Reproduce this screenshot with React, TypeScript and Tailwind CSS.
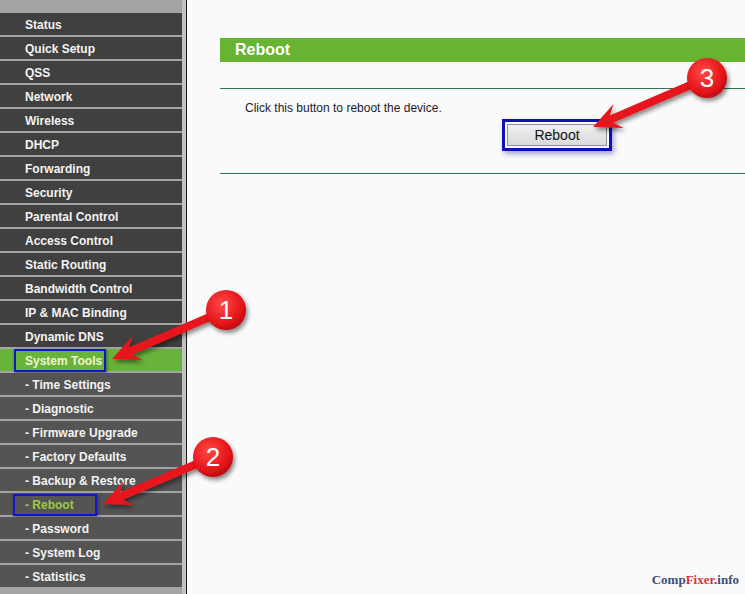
import React from "react";

type MenuItem = { label: string; sub?: boolean; active?: boolean; current?: boolean };

const menu: MenuItem[] = [
  { label: "Status" },
  { label: "Quick Setup" },
  { label: "QSS" },
  { label: "Network" },
  { label: "Wireless" },
  { label: "DHCP" },
  { label: "Forwarding" },
  { label: "Security" },
  { label: "Parental Control" },
  { label: "Access Control" },
  { label: "Static Routing" },
  { label: "Bandwidth Control" },
  { label: "IP & MAC Binding" },
  { label: "Dynamic DNS" },
  { label: "System Tools", active: true },
  { label: "- Time Settings", sub: true },
  { label: "- Diagnostic", sub: true },
  { label: "- Firmware Upgrade", sub: true },
  { label: "- Factory Defaults", sub: true },
  { label: "- Backup & Restore", sub: true },
  { label: "- Reboot", sub: true, current: true },
  { label: "- Password", sub: true },
  { label: "- System Log", sub: true },
  { label: "- Statistics", sub: true },
];

function arrowPoints(sx: number, sy: number, tx: number, ty: number) {
  const dx = tx - sx;
  const dy = ty - sy;
  const len = Math.hypot(dx, dy);
  const ux = dx / len;
  const uy = dy / len;
  const nx = -uy;
  const ny = ux;
  const w = 4;
  const L = 28;
  const H = 13;
  const notch = 20;
  const bx = tx - ux * notch;
  const by = ty - uy * notch;
  const hx = tx - ux * L;
  const hy = ty - uy * L;
  const pts = [
    [sx + nx * w, sy + ny * w],
    [bx + nx * w, by + ny * w],
    [hx + nx * H, hy + ny * H],
    [tx, ty],
    [hx - nx * H, hy - ny * H],
    [bx - nx * w, by - ny * w],
    [sx - nx * w, sy - ny * w],
  ];
  return pts.map((p) => p.map((v) => v.toFixed(1)).join(",")).join(" ");
}

const callouts = [
  { n: "1", cx: 226, cy: 310, tx: 112, ty: 359 },
  { n: "2", cx: 213, cy: 457, tx: 103, ty: 504 },
  { n: "3", cx: 707, cy: 78, tx: 593, ty: 127 },
];

function Annotations() {
  return (
    <svg className="absolute inset-0 pointer-events-none" width="745" height="594" viewBox="0 0 745 594">
      <defs>
        <filter id="shadow" x="-30%" y="-30%" width="160%" height="160%">
          <feDropShadow dx="2" dy="3" stdDeviation="2" floodColor="#000" floodOpacity="0.45" />
        </filter>
        <radialGradient id="ball" cx="40%" cy="35%" r="70%">
          <stop offset="0%" stopColor="#ff4b44" />
          <stop offset="70%" stopColor="#e5141a" />
          <stop offset="100%" stopColor="#b80c10" />
        </radialGradient>
      </defs>
      {callouts.map((c) => (
        <g key={c.n}>
          <polygon points={arrowPoints(c.cx, c.cy, c.tx, c.ty)} fill="#e6151b" filter="url(#shadow)" />
          <circle cx={c.cx} cy={c.cy} r="20" fill="url(#ball)" filter="url(#shadow)" />
          <text
            x={c.cx}
            y={c.cy + 9}
            textAnchor="middle"
            fill="#ffffff"
            fontSize="26"
            fontFamily="'Liberation Sans', Arial, sans-serif"
          >
            {c.n}
          </text>
        </g>
      ))}
    </svg>
  );
}

export default function App() {
  return (
    <div className="relative w-[745px] h-[594px] overflow-hidden bg-[#fafafa] font-['Liberation_Sans',Arial,sans-serif]">
      <div className="flex h-full">
        {/* Sidebar menu */}
        <div className="flex h-full">
          <div className="w-[182px] h-full bg-[#a4a4a4] pt-[13px] flex flex-col gap-[2px]">
            {menu.map((item) => {
              const bg = item.active ? "bg-[#68b43a]" : item.sub ? "bg-[#545454]" : "bg-[#404040]";
              const color = item.active ? "text-[#f2f3d2]" : item.current ? "text-[#9ccc3c]" : "text-[#f3f3f3]";
              return (
                <div
                  key={item.label}
                  className={`relative h-[22px] shrink-0 flex items-center pt-[1px] pl-[25px] text-[12px] font-bold ${bg} ${color}`}
                >
                  {item.label}
                  {item.active && (
                    <div className="absolute left-[14px] top-0 w-[92px] h-[23px] border-[2px] border-[#1414c8] shadow-[1px_1px_3px_rgba(0,0,80,0.5)]" />
                  )}
                  {item.current && (
                    <div className="absolute left-[13px] top-[1px] w-[84px] h-[22px] border-[2px] border-[#1414c8] shadow-[1px_1px_3px_rgba(0,0,80,0.5)]" />
                  )}
                </div>
              );
            })}
          </div>
          <div className="w-[4px] h-full bg-[#c2c2c2]" />
          <div className="w-[1px] h-full bg-[#1a1a1a]" />
        </div>

        {/* Content */}
        <div className="flex-1 pl-[33px] pt-[38px]">
          <div className="h-[24px] bg-[#67b332] flex items-center pl-[15px] text-[16px] font-bold text-white">
            Reboot
          </div>
          <div className="mt-[26px] h-[1px] bg-[#2f7650]" />
          <p className="mt-[12px] pl-[25px] text-[12px] leading-[14px] text-[#1c1a2a]">
            Click this button to reboot the device.
          </p>
          <div className="mt-[4px] pl-[282px] flex">
            <div className="flex border-[3px] border-[#1010b8] p-[2px] shadow-[2px_3px_5px_rgba(80,80,180,0.5)]">
              <button className="w-[100px] h-[22px] border border-[#8f8f8f] bg-gradient-to-b from-[#f0f0f0] to-[#dadada] text-[14px] leading-[20px] text-[#111]">
                Reboot
              </button>
            </div>
          </div>
          <div className="mt-[22px] h-[1px] bg-[#2f7650]" />
        </div>
      </div>

      <Annotations />

      <div className="absolute right-[6px] bottom-[5px] text-[13px] font-bold font-['Liberation_Serif',serif] text-[#3e4d78]">
        Comp<span className="text-[#d8323a]">Fixer</span>.info
      </div>
    </div>
  );
}
